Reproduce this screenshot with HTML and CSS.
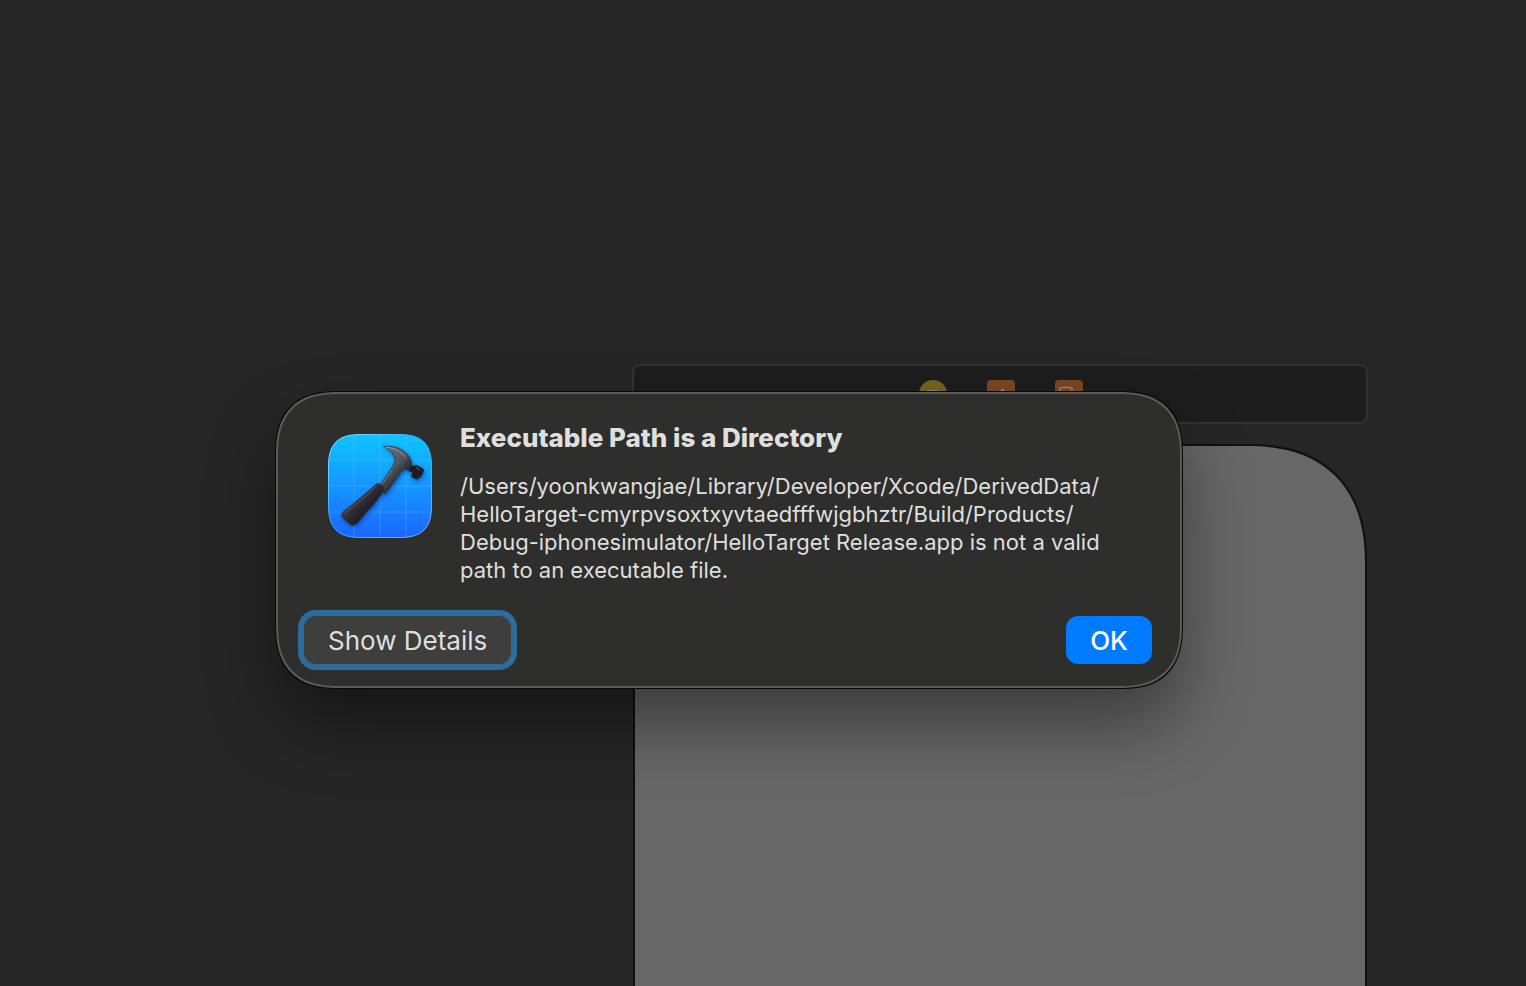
FILE: index.html
```html
<!DOCTYPE html>
<html lang="en">
<head>
<meta charset="utf-8">
<title>Executable Path is a Directory</title>
<link rel="stylesheet" href="styles.css">
</head>
<body>
<main class="canvas">
  <div class="scene">
    <div class="scene-dock">
      <svg class="dock-icon" viewBox="0 0 28 28" aria-hidden="true">
        <circle cx="14" cy="14" r="14" fill="#75641e"/>
        <rect x="8" y="10" width="12" height="9" rx="2" fill="#8f8b78"/>
      </svg>
      <svg class="dock-icon" viewBox="0 0 28 28" aria-hidden="true">
        <rect width="28" height="28" rx="4" fill="#7a4822"/>
        <path d="M17 8v12L8 14z" fill="#8f8780"/>
      </svg>
      <svg class="dock-icon" viewBox="0 0 28 28" aria-hidden="true">
        <rect width="28" height="28" rx="4" fill="#7a4822"/>
        <rect x="5" y="7.500" width="12" height="13" rx="2" fill="none" stroke="#8f8780" stroke-width="1.500"/>
        <path d="M14 13h9" stroke="#8f8780" stroke-width="1.500"/>
      </svg>
    </div>
    <div class="device"></div>
  </div>

  <section class="alert" role="alertdialog" aria-labelledby="alert-title" aria-describedby="alert-message">
    <div class="alert-content">
      <svg class="app-icon" viewBox="0 0 104 104" aria-hidden="true">
        <defs>
          <linearGradient id="sky" x1="0" y1="0" x2="0" y2="1">
            <stop offset="0" stop-color="#10c4ff"/>
            <stop offset=".5" stop-color="#1496ff"/>
            <stop offset="1" stop-color="#1c66ff"/>
          </linearGradient>
          <linearGradient id="rim" x1="0" y1="0" x2="1" y2="1">
            <stop offset="0" stop-color="#8beaff"/>
            <stop offset=".45" stop-color="#30a4ff"/>
            <stop offset="1" stop-color="#7fb6ff"/>
          </linearGradient>
          <linearGradient id="grip" x1="0" y1="0" x2="1" y2="1">
            <stop offset=".3" stop-color="#45454d"/>
            <stop offset=".5" stop-color="#2b2a32"/>
            <stop offset=".75" stop-color="#17161b"/>
          </linearGradient>
          <linearGradient id="steel" gradientUnits="userSpaceOnUse" x1="58" y1="22" x2="78" y2="40">
            <stop offset="0" stop-color="#666a72"/>
            <stop offset=".5" stop-color="#54575f"/>
            <stop offset="1" stop-color="#24252c"/>
          </linearGradient>
          <filter id="drop" x="-20%" y="-20%" width="140%" height="140%">
            <feDropShadow dx="1" dy="2" stdDeviation="2" flood-color="#04205c" flood-opacity=".55"/>
          </filter>
        </defs>
        <path d="M32 .5H72C94 .5 103.500 10 103.500 32V72C103.500 94 94 103.500 72 103.500H32C10 103.500 .5 94 .5 72V32C.5 10 10 .5 32 .5Z" fill="url(#sky)" stroke="url(#rim)"/>
        <path d="M26 1V103M52 1V103M78 1V103M1 26H103M1 52H103M1 78H103" stroke="#69d0ff" stroke-opacity=".3" fill="none"/>
        <g filter="url(#drop)">
          <path d="M55.300 12.700C63 11 72 13.500 78 19C82 22.500 83 26 84 31L84.500 35.500 82 37.500C80 35.500 78 35 76 35.500C74 36 73 38 71 41L57 60 50 54 61 38C64.500 33 67.500 29 67 25C66 19 61 14.500 55.300 12.700Z" fill="url(#steel)" stroke="#24262d" stroke-width=".6"/>
          <path d="M57 13.300C66 13.500 73 17 78 24" fill="none" stroke="#b5bac1" stroke-width=".9" stroke-opacity=".65"/>
          <path d="M64 36.500 52 52.500" fill="none" stroke="#a0a4ab" stroke-width="1" stroke-opacity=".5"/>
          <path d="M83.500 32.500C85 32.500 86.500 30.500 88.700 31L95.600 35C96.500 38.500 93 43.500 88.700 45.500L84 43.500C82.500 42 83.500 40 84.500 38.500L81.500 37Z" fill="#1b1c22"/>
          <path d="M88 33.500 92 36" stroke="#777a80" stroke-width="1" stroke-linecap="round" stroke-opacity=".7"/>
          <path d="M48.500 49.500C51.500 48 57.500 52.500 56 55.500C52 65 40 76 32 86C29 89.500 26 92.500 22 90.500L14 83.500C12.500 81.500 13.500 79 15.500 77C27 68 38 59 48.500 49.500Z" fill="url(#grip)"/>
          <path d="M48 52.500C38 62.500 27 71 16.500 79.500" fill="none" stroke="#70717a" stroke-width=".9" stroke-opacity=".7"/>
        </g>
      </svg>
      <div class="alert-text">
        <h1 class="alert-title" id="alert-title">Executable Path is a Directory</h1>
        <p class="alert-message" id="alert-message">/Users/yoonkwangjae/Library/Developer/Xcode/DerivedData/<wbr>HelloTarget-cmyrpvsoxtxyvtaedfffwjgbhztr/Build/Products/<wbr>Debug-iphonesimulator/HelloTarget Release.app is not a valid path to an executable file.</p>
      </div>
    </div>
    <div class="alert-actions">
      <button class="button button-details" type="button">Show Details</button>
      <button class="button button-default" type="button">OK</button>
    </div>
  </section>
</main>
</body>
</html>
```
FILE: styles.css
```css
* {
  box-sizing: border-box;
}

body {
  margin: 0;
  background: #262626;
  color: #dfdfde;
  font-family: Inter, "Liberation Sans", sans-serif;
}

.canvas {
  position: relative;
  display: flex;
  min-height: 100vh;
  padding: 364px 158px 0 632px;
  overflow: hidden;
}

.scene {
  display: flex;
  flex: 1;
  flex-direction: column;
  gap: 20px;
}

.scene-dock {
  display: flex;
  justify-content: center;
  gap: 40px;
  padding: 14px 0 14px 2px;
  border: 2px solid #323232;
  border-radius: 8px;
  background: #1d1d1d;
}

.dock-icon {
  width: 28px;
  height: 28px;
}

.device {
  flex: 1;
  margin: 0 1px;
  border: 2px solid #101010;
  border-bottom: 0;
  border-radius: 120px 120px 0 0;
  corner-shape: superellipse(1.25);
  background: #676767;
}

.alert {
  position: absolute;
  top: 392px;
  left: 276px;
  width: 906px;
  padding: 28px 28px 22px 26px;
  border: 2px solid #5a5a59;
  border-radius: 64px;
  corner-shape: superellipse(1.35);
  background: #2e2e2c;
  box-shadow: 0 0 0 1px #080808, 0 36px 68px rgba(0, 0, 0, 0.42);
}

.alert-content {
  display: flex;
  gap: 28px;
  padding: 0 24px;
}

.app-icon {
  flex: none;
  width: 104px;
  height: 104px;
  margin-top: 12px;
}

.alert-title {
  margin: 0 0 18px;
  font-size: 26px;
  font-weight: 800;
  line-height: 32px;
}

.alert-message {
  margin: 0;
  font-size: 22px;
  line-height: 28px;
}

.alert-actions {
  display: flex;
  justify-content: space-between;
  margin-top: 32px;
}

.button {
  height: 48px;
  padding: 2px 24px 0;
  border: 0;
  border-radius: 12px;
  font: 500 26px/32px Inter, "Liberation Sans", sans-serif;
}

.button-details {
  outline: 6px solid #2e6d9b;
  background: #3e3e3c;
  color: #dfdfde;
  font-weight: 400;
}

.button-default {
  background: #007aff;
  color: #fff;
}
```
